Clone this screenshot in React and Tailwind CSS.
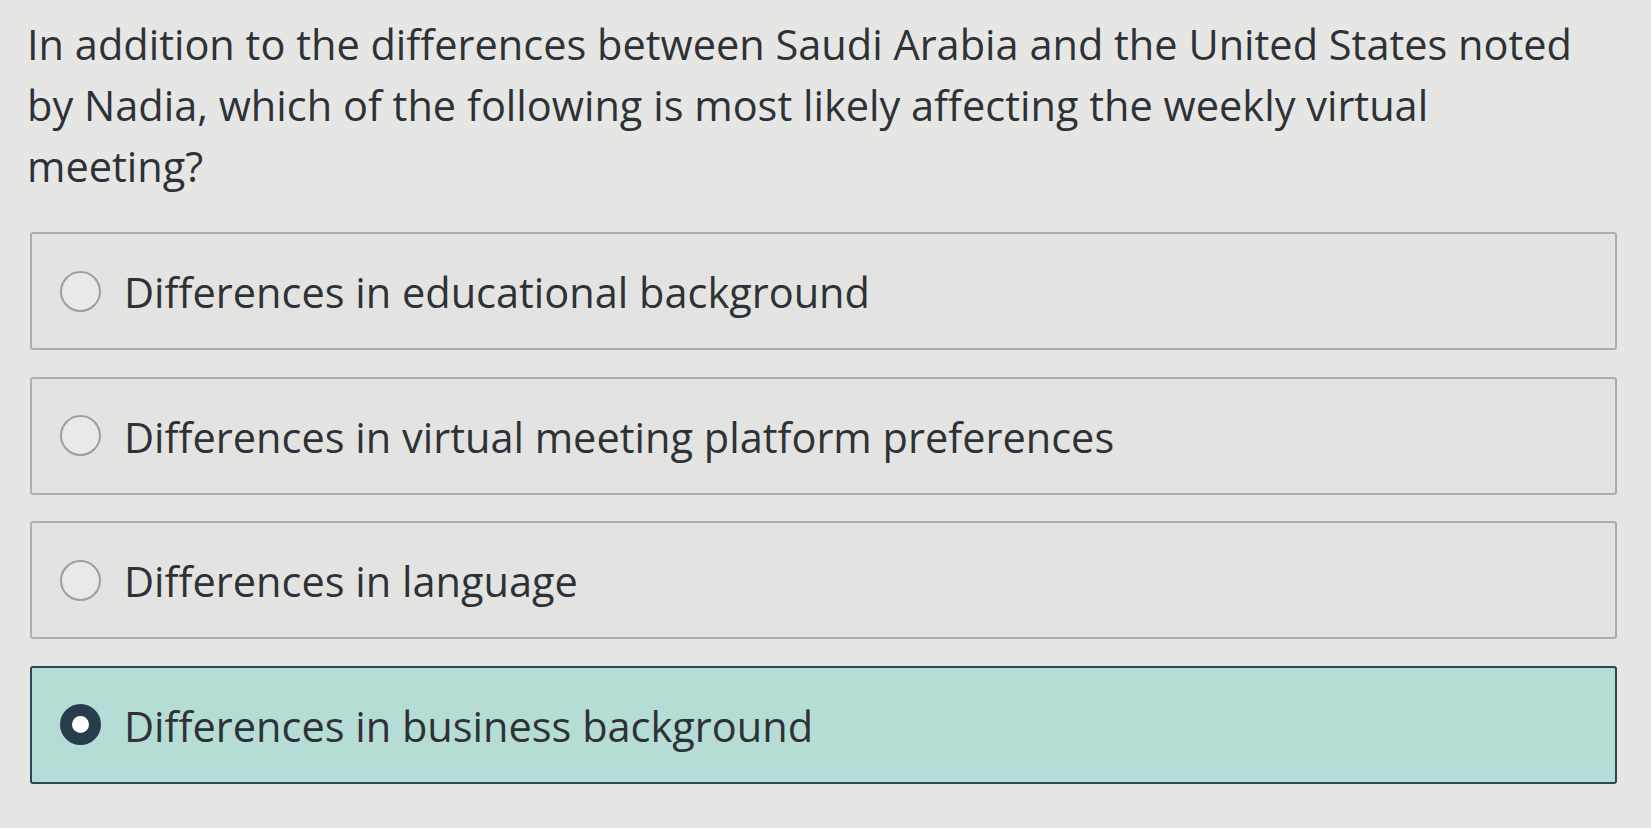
import React from "react"

const options = [
  { label: "Differences in educational background", selected: false },
  { label: "Differences in virtual meeting platform preferences", selected: false },
  { label: "Differences in language", selected: false },
  { label: "Differences in business background", selected: true },
]

const Radio = ({ selected }) =>
  selected ? (
    <span className="w-[41px] h-[41px] rounded-full border-[12px] border-[#283d4b] bg-white shrink-0"></span>
  ) : (
    <span className="w-[41px] h-[41px] rounded-full border-2 border-[#9c9d9c] bg-[#e9eae8] shrink-0"></span>
  )

export default function App() {
  return (
    <div className="w-[1651px] h-[828px] bg-[#e6e7e4] overflow-hidden text-[#2e3236]" style={{ fontFamily: '"Open Sans", "Noto Sans", sans-serif' }}>
      <div className="pl-[27px] pt-[14px]">
        <p className="text-[41.5px] leading-[61px] w-[1565px]">
          In addition to the differences between Saudi Arabia and the United States noted by Nadia, which of the following is most likely affecting the weekly virtual meeting?
        </p>
      </div>
      <div className="flex flex-col gap-[26.5px] mt-[35px] ml-[30px] w-[1587px]">
        {options.map((o) => (
          <div
            key={o.label}
            className={
              o.selected
                ? "h-[118px] flex items-center gap-[23px] pl-[28px] rounded-[3px] border-2 border-[#2d4651] bg-[#b6ddd5]"
                : "h-[118px] flex items-center gap-[23px] pl-[28px] rounded-[3px] border-2 border-[#adaeac] bg-[#e3e4e1]"
            }
          >
            <Radio selected={o.selected} />
            <span className="text-[41.5px] leading-none pt-[4px]">{o.label}</span>
          </div>
        ))}
      </div>
    </div>
  )
}
